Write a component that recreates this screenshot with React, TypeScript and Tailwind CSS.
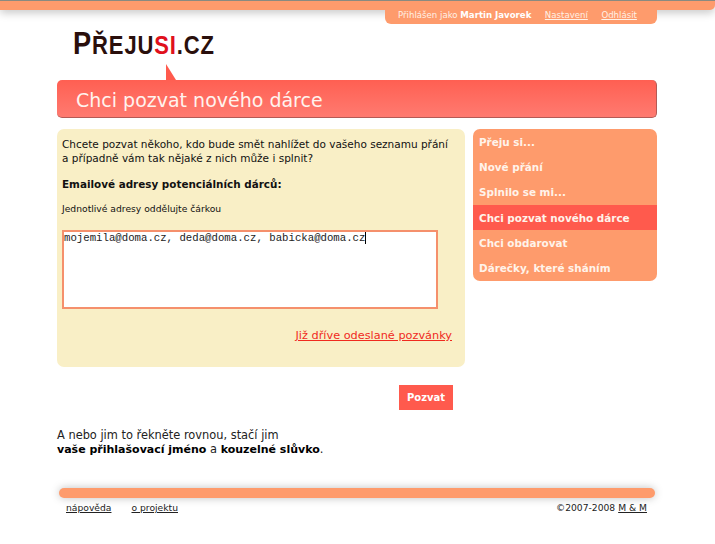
export default function App() {
  const items = ["Přeju si...", "Nové přání", "Splnilo se mi...", "Chci pozvat nového dárce", "Chci obdarovat", "Dárečky, které sháním"];
  return (
    <div className="w-[715px] h-[544px] overflow-hidden bg-white text-[#111] font-['DejaVu_Sans','Verdana',sans-serif]">
      <div className="h-[10px] border-t border-[#8a8a80] bg-[#fe9b6c] rounded-br-[5px] shadow-[0_3px_8px_rgba(0,0,0,0.22)]" />
      <div className="w-[600px] ml-[57px]">
        <div className="flex justify-end -mt-px relative">
          <div className="w-[272px] h-[15px] pb-[3px] bg-[#fe9b6c] rounded-b-[6px] flex items-center pl-[13px] gap-[13.5px] text-[8.6px] text-[#fff1e6] leading-none">
            <span>Přihlášen jako <b className="text-white">Martin Javorek</b></span>
            <a className="underline">Nastavení</a>
            <a className="underline">Odhlásit</a>
          </div>
        </div>
        <div className="h-[56px] relative">
          <div className="absolute left-[16px] top-[8px] text-[25px] leading-[24px] font-bold text-[#2a0f0c] font-['Liberation_Sans',sans-serif] tracking-[1px] whitespace-nowrap origin-left scale-x-[0.88]">
            <span className="text-[31px]">P</span>ŘEJU<span className="text-[#e0101c]">SI</span>.CZ
          </div>
          <svg className="absolute left-[109px] top-[40px]" width="12" height="16" viewBox="0 0 12 16"><path d="M0 0 L10 16 L0 16 Z" fill="#ff5a4d" /></svg>
        </div>
        <div className="h-[38px] rounded-[5px] border-b border-r border-[#b45a55] bg-gradient-to-b from-[#ff5f52] to-[#ff7a70] pl-[19px] pt-[3px] flex items-center text-[19px] text-[#fff3ee]">
          Chci pozvat nového dárce
        </div>
        <div className="flex gap-[8px] mt-[11px] items-start">
          <div className="w-[408px] h-[238px] bg-[#f9efc6] rounded-[7px] pt-[8px] px-[5px] text-[10.5px]">
            <p className="leading-[14px] whitespace-nowrap">Chcete pozvat někoho, kdo bude smět nahlížet do vašeho seznamu přání<br />a případně vám tak nějaké z nich může i splnit?</p>
            <p className="font-bold mt-[12px] leading-[14px] text-[10.4px]">Emailové adresy potenciálních dárců:</p>
            <p className="text-[9.2px] mt-[12px] leading-[12px]">Jednotlivé adresy oddělujte čárkou</p>
            <div className="mt-[15px] w-[376px] h-[79px] border-2 border-[#f5906c] bg-white text-[10.7px] leading-[12px] font-['Liberation_Mono',monospace] text-[#222] whitespace-nowrap">
              mojemila@doma.cz, deda@doma.cz, babicka@doma.cz<span className="border-r border-black" />
            </div>
            <div className="mt-[19px] pr-[8px] text-right text-[11.3px] leading-[16px]">
              <a className="underline text-[#f02a1e]">Již dříve odeslané pozvánky</a>
            </div>
          </div>
          <nav className="w-[184px] bg-[#fe9b6c] rounded-[7px] overflow-hidden">
            {items.map((t, i) => (
              <div key={t} className={`h-[25.3px] pl-[6px] pt-[2px] flex items-center text-[10.4px] font-bold text-[#fff3ea] ${i === 3 ? "bg-[#ff5a4d]" : ""}`}>{t}</div>
            ))}
          </nav>
        </div>
        <div className="w-[396px] flex justify-end mt-[18px]">
          <button className="w-[54px] h-[25px] bg-[#ff5a4d] text-white text-[10px] font-bold">Pozvat</button>
        </div>
        <div className="mt-[18px] text-[11.4px] leading-[14px] text-[#222]">
          A nebo jim to řekněte rovnou, stačí jim<br />
          <b className="text-black text-[11px]">vaše přihlašovací jméno</b> a <b className="text-black text-[11px]">kouzelné slůvko</b>.
        </div>
        <div className="mt-[31px] mx-[2px] h-[10px] rounded-[5px] bg-[#fe9b6c] shadow-[0_0_8px_rgba(0,0,0,0.25)]" />
        <div className="mt-[4px] px-[10px] flex justify-between text-[9.2px] leading-[12px] text-[#222]">
          <div className="flex gap-[20px] -ml-px">
            <a className="underline">nápověda</a>
            <a className="underline">o projektu</a>
          </div>
          <div>©2007-2008 <a className="underline">M &amp; M</a></div>
        </div>
      </div>
    </div>
  );
}
